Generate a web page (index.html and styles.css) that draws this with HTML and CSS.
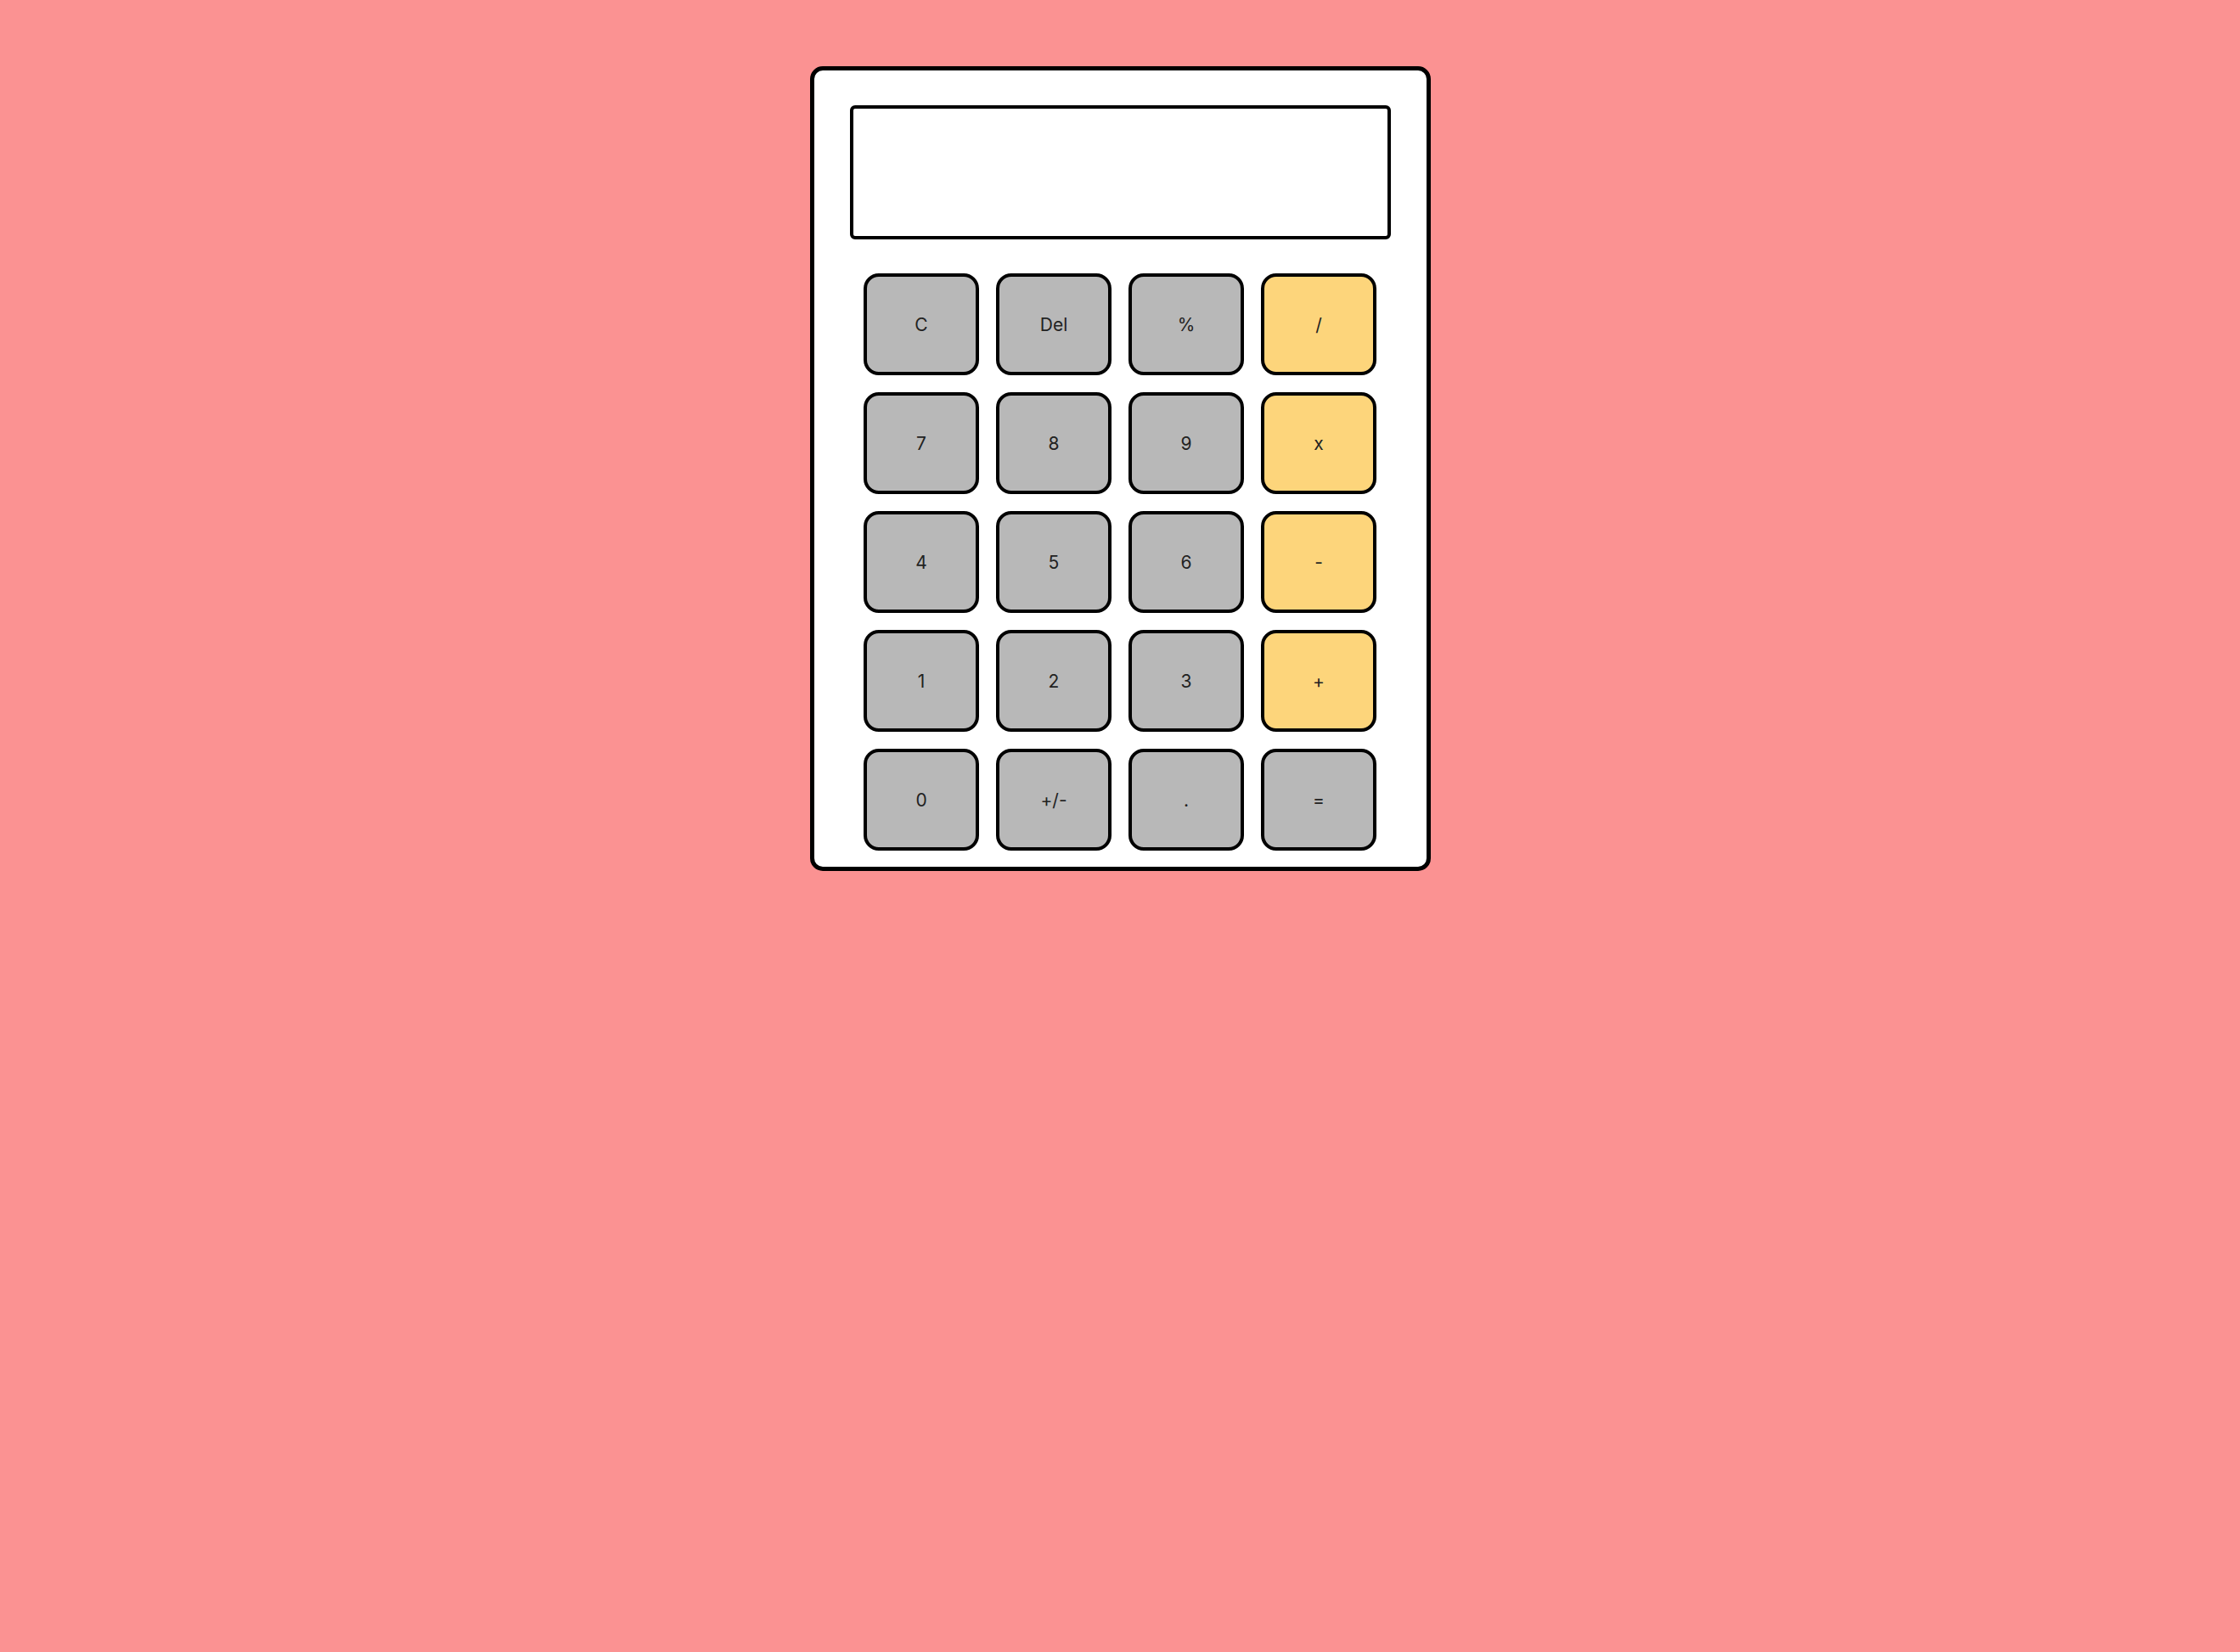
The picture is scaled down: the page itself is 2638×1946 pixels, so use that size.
FILE: index.html
```html
<!DOCTYPE html>
<html>
<head>
  <meta charset="UTF-8">
  <title>Calculator</title>
  <link rel="stylesheet" href="styles.css">
</head>
<body>
  <div class="calculator">
    <div class="display" id="display"></div>
    <div class="keys">
      <button class="key">C</button>
      <button class="key">Del</button>
      <button class="key">%</button>
      <button class="key operator">/</button>
      <button class="key">7</button>
      <button class="key">8</button>
      <button class="key">9</button>
      <button class="key operator">x</button>
      <button class="key">4</button>
      <button class="key">5</button>
      <button class="key">6</button>
      <button class="key operator">-</button>
      <button class="key">1</button>
      <button class="key">2</button>
      <button class="key">3</button>
      <button class="key operator">+</button>
      <button class="key">0</button>
      <button class="key">+/-</button>
      <button class="key">.</button>
      <button class="key">=</button>
    </div>
  </div>
</body>
</html>
```

FILE: styles.css
```css
body {
  margin: 0;
  background-color: #fb9292;
  font-family: Inter, "Liberation Sans", sans-serif;
}
.calculator {
  width: 637px;
  margin: 78px auto 0;
  padding: 41px 42px 19px;
  background-color: #fff;
  border: 5px solid #000;
  border-radius: 15px;
}
.display {
  height: 158px;
  box-sizing: border-box;
  border: 4px solid #000;
  border-radius: 6px;
  background-color: #fff;
}
.keys {
  display: grid;
  grid-template-columns: repeat(4, 136px);
  grid-auto-rows: 120px;
  gap: 20px;
  justify-content: center;
  margin-top: 40px;
}
.key {
  background-color: #b8b8b8;
  border: 4px solid #000;
  border-radius: 18px;
  font-family: Inter, "Liberation Sans", sans-serif;
  font-size: 21px;
  color: #222;
  cursor: pointer;
}
.operator {
  background-color: #fdd57b;
}
```
